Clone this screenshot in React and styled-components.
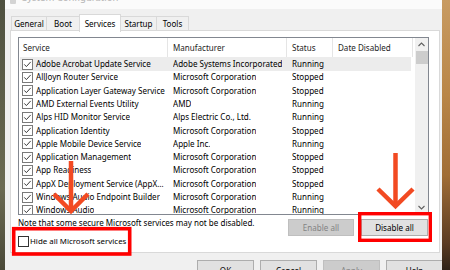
import React from 'react';
import styled, { createGlobalStyle } from 'styled-components';

const Global = createGlobalStyle`
  html, body { margin: 0; padding: 0; }
  body {
    width: 450px; height: 270px; overflow: hidden;
    font-family: "Noto Sans", "Segoe UI", sans-serif;
    -webkit-font-smoothing: antialiased;
  }
`;

const FONT = '8.05px';

const Stage = styled.div`
  position: relative;
  width: 450px;
  height: 270px;
  display: flex;
  align-items: flex-start;
  overflow: hidden;
`;

const PhotoLeft = styled.div`
  width: 5px;
  height: 270px;
  flex: none;
  background: linear-gradient(180deg, #4f5140 0%, #5f604a 40%, #6b6a52 70%, #4a4938 100%);
`;

const PhotoRight = styled.div`
  flex: 1;
  height: 270px;
  background: linear-gradient(180deg, #c89b62 0%, #b98648 35%, #a06d35 65%, #5a3b22 90%, #2e2218 100%);
`;

const Win = styled.div`
  width: 437px;
  height: 270px;
  flex: none;
  background: #f0f0f0;
  display: flex;
  flex-direction: column;
  overflow: hidden;
  & > * { flex: none; }
`;

const TitleBar = styled.div`
  height: 9px;
  background: #fbfbfb;
  overflow: hidden;
  display: flex;
  align-items: flex-start;
  gap: 6px;
  padding-left: 5px;
`;

const TitleIcon = styled.div`
  width: 6px;
  height: 10px;
  margin-top: -6px;
  background: #d4d4d4;
  border-radius: 1px;
  flex: none;
`;

const TitleText = styled.div`
  margin-top: -8px;
  font-size: 9.5px;
  line-height: 12px;
  color: #b4b4b4;
  white-space: nowrap;
`;

const TabStrip = styled.div`
  height: 22px;
  display: flex;
  align-items: flex-end;
  padding-left: 6px;
  position: relative;
  z-index: 1;
`;

const Tab = styled.div`
  width: ${p => p.$w}px;
  height: ${p => (p.$active ? 18 : 15)}px;
  margin-bottom: ${p => (p.$active ? -1 : 0)}px;
  box-sizing: border-box;
  border: 1px solid #d9d9d9;
  border-left-width: ${p => (p.$first || p.$active ? 1 : 0)}px;
  border-right-width: ${p => (p.$beforeActive ? 0 : 1)}px;
  border-bottom: ${p => (p.$active ? 'none' : '1px solid #d9d9d9')};
  background: ${p => (p.$active ? '#ffffff' : '#f0f0f0')};
  font-size: ${FONT};
  color: #000;
  display: flex;
  align-items: ${p => (p.$active ? 'flex-start' : 'center')};
  padding-top: ${p => (p.$active ? 3 : 0)}px;
  justify-content: center;
  line-height: 12px;
  flex: none;
`;

const Panel = styled.div`
  margin: -1px 2px 0 5px;
  height: 223px;
  box-sizing: border-box;
  border: 1px solid #d9d9d9;
  background: #fff;
  padding: 6px 11px 0 7px;
  display: flex;
  flex-direction: column;
  & > * { flex: none; }
`;

const List = styled.div`
  width: 411px;
  height: 178px;
  box-sizing: border-box;
  border: 1px solid #828790;
  display: flex;
  overflow: hidden;
`;

const ListMain = styled.div`
  flex: 1;
  display: flex;
  flex-direction: column;
  overflow: hidden;
`;

const HeaderRow = styled.div`
  height: 19.4px;
  flex: none;
  display: flex;
`;

const HeaderCell = styled.div`
  width: ${p => p.$w}px;
  flex: none;
  box-sizing: border-box;
  border-right: 1px solid #e5e5e5;
  padding-left: ${p => p.$pad}px;
  font-size: ${FONT};
  color: #1e1e1e;
  display: flex;
  align-items: center;
  white-space: nowrap;
`;

const Row = styled.div`
  height: 13.3px;
  flex: none;
  display: flex;
  align-items: center;
  margin-left: 1px;
  width: 391px;
  background: ${p => (p.$selected ? '#ececec' : 'transparent')};
`;

const Cell = styled.div`
  width: ${p => p.$w}px;
  flex: none;
  box-sizing: border-box;
  padding-left: ${p => p.$pad}px;
  font-size: ${FONT};
  line-height: 12px;
  color: #000;
  white-space: nowrap;
  overflow: hidden;
  display: flex;
  align-items: center;
  gap: 3px;
`;

const CellText = styled.span`
  overflow: hidden;
  text-overflow: ellipsis;
  white-space: nowrap;
`;

const ScrollBar = styled.div`
  width: 13px;
  flex: none;
  background: #f0f0f0;
  display: flex;
  flex-direction: column;
  align-items: center;
`;

const ScrollBtn = styled.div`
  width: 13px;
  height: 13px;
  flex: none;
  display: flex;
  align-items: center;
  justify-content: center;
`;

const Thumb = styled.div`
  width: 12px;
  height: 13px;
  background: #cdcdcd;
  flex: none;
`;

const ScrollTrack = styled.div`
  flex: 1;
`;

const Footer = styled.div`
  display: flex;
  justify-content: space-between;
`;

const FooterLeft = styled.div`
  display: flex;
  flex-direction: column;
`;

const Note = styled.div`
  margin-top: 2px;
  font-size: ${FONT};
  line-height: 12px;
  color: #000;
  white-space: nowrap;
`;

const HideRow = styled.div`
  margin-top: 6px;
  display: flex;
  align-items: center;
  gap: 1px;
  font-size: 7.9px;
  line-height: 12px;
  color: #000;
  white-space: nowrap;
`;

const Box = styled.div`
  width: 11px;
  height: 11px;
  box-sizing: border-box;
  border: 1px solid #333;
  background: #fff;
  flex: none;
`;

const FooterButtons = styled.div`
  display: flex;
  gap: 7px;
  margin-top: 4px;
`;

const Btn = styled.div`
  width: ${p => p.$w}px;
  height: ${p => p.$h || 17}px;
  flex: none;
  box-sizing: border-box;
  border: 1px solid ${p => (p.$disabled ? '#bfbfbf' : '#adadad')};
  background: ${p => (p.$disabled ? '#cccccc' : '#e1e1e1')};
  color: ${p => (p.$disabled ? '#838383' : '#000')};
  font-size: ${FONT};
  display: flex;
  align-items: center;
  justify-content: center;
  line-height: 12px;
`;

const BottomRow = styled.div`
  display: flex;
  justify-content: flex-end;
  gap: 6px;
  margin-top: 7px;
  margin-right: -1px;
`;

const Overlay = styled.svg`
  position: absolute;
  left: 0;
  top: 0;
  pointer-events: none;
`;

const Check = () => (
  <svg width="11" height="11" viewBox="0 0 11 11" style={{ flex: 'none' }}>
    <rect x="0.5" y="0.5" width="10" height="10" fill="#fff" stroke="#7a7a7a" />
    <path d="M2.3 5.4 L4.4 7.6 L8.7 2.9" fill="none" stroke="#3a3a3a" strokeWidth="1" />
  </svg>
);

const Chevron = ({ up }) => (
  <svg width="7" height="5" viewBox="0 0 7 5">
    <path d={up ? 'M0.5 4 L3.5 1 L6.5 4' : 'M0.5 1 L3.5 4 L6.5 1'} fill="none" stroke="#606060" strokeWidth="1.1" />
  </svg>
);

const rows = [
  ['Adobe Acrobat Update Service', 'Adobe Systems Incorporated', 'Running'],
  ['AllJoyn Router Service', 'Microsoft Corporation', 'Stopped'],
  ['Application Layer Gateway Service', 'Microsoft Corporation', 'Stopped'],
  ['AMD External Events Utility', 'AMD', 'Running'],
  ['Alps HID Monitor Service', 'Alps Electric Co., Ltd.', 'Running'],
  ['Application Identity', 'Microsoft Corporation', 'Stopped'],
  ['Apple Mobile Device Service', 'Apple Inc.', 'Running'],
  ['Application Management', 'Microsoft Corporation', 'Stopped'],
  ['App Readiness', 'Microsoft Corporation', 'Stopped'],
  ['AppX Deployment Service (AppXSVC)', 'Microsoft Corporation', 'Stopped'],
  ['Windows Audio Endpoint Builder', 'Microsoft Corporation', 'Running'],
  ['Windows Audio', 'Microsoft Corporation', 'Running'],
];

const cols = [149, 119, 46, 80];

const tabs = [
  { label: 'General', w: 36 },
  { label: 'Boot', w: 32 },
  { label: 'Services', w: 42, active: true },
  { label: 'Startup', w: 36 },
  { label: 'Tools', w: 32 },
];

export default function App() {
  return (
    <>
      <Global />
      <Stage>
        <PhotoLeft />
        <Win>
          <TitleBar>
            <TitleIcon />
            <TitleText>System Configuration</TitleText>
          </TitleBar>
          <TabStrip>
            {tabs.map((t, i) => (
              <Tab
                key={t.label}
                $w={t.w}
                $active={t.active}
                $first={i === 0}
                $beforeActive={tabs[i + 1] && tabs[i + 1].active}
              >
                {t.label}
              </Tab>
            ))}
          </TabStrip>
          <Panel>
            <List>
              <ListMain>
                <HeaderRow>
                  <HeaderCell $w={cols[0]} $pad={4}>Service</HeaderCell>
                  <HeaderCell $w={cols[1]} $pad={5}>Manufacturer</HeaderCell>
                  <HeaderCell $w={cols[2]} $pad={5}>Status</HeaderCell>
                  <HeaderCell $w={cols[3]} $pad={5}>Date Disabled</HeaderCell>
                </HeaderRow>
                {rows.map((r, i) => (
                  <Row key={r[0]} $selected={i === 0}>
                    <Cell $w={cols[0] - 1} $pad={2}>
                      <Check />
                      <CellText>{r[0]}</CellText>
                    </Cell>
                    <Cell $w={cols[1]} $pad={5}><CellText>{r[1]}</CellText></Cell>
                    <Cell $w={cols[2]} $pad={5}><CellText>{r[2]}</CellText></Cell>
                    <Cell $w={cols[3]} $pad={5} />
                  </Row>
                ))}
              </ListMain>
              <ScrollBar>
                <ScrollBtn><Chevron up /></ScrollBtn>
                <Thumb />
                <ScrollTrack />
                <ScrollBtn><Chevron /></ScrollBtn>
              </ScrollBar>
            </List>
            <Footer>
              <FooterLeft>
                <Note>Note that some secure Microsoft services may not be disabled.</Note>
                <HideRow>
                  <Box />
                  Hide all Microsoft services
                </HideRow>
              </FooterLeft>
              <FooterButtons>
                <Btn $w={66} $disabled>Enable all</Btn>
                <Btn $w={67}>Disable all</Btn>
              </FooterButtons>
            </Footer>
          </Panel>
          <BottomRow>
            <Btn $w={57} $h={22}>OK</Btn>
            <Btn $w={57} $h={22}>Cancel</Btn>
            <Btn $w={57} $h={22} $disabled>Apply</Btn>
            <Btn $w={57} $h={22}>Help</Btn>
          </BottomRow>
        </Win>
        <PhotoRight />
        <Overlay width="450" height="270" viewBox="0 0 450 270">
          <rect x="13.7" y="228.7" width="116" height="25.3" fill="none" stroke="#f00" strokeWidth="3.6" />
          <rect x="359.7" y="213.7" width="70.6" height="26.6" fill="none" stroke="#f00" strokeWidth="3.4" />
          <g stroke="#f24a22" strokeWidth="4.5" fill="none">
            <line x1="71" y1="161" x2="71" y2="210" />
            <polyline points="54,194 71,211 88,194" />
            <line x1="395.5" y1="153" x2="395.5" y2="204" />
            <polyline points="378,189 395.5,206 413,189" />
          </g>
        </Overlay>
      </Stage>
    </>
  );
}
